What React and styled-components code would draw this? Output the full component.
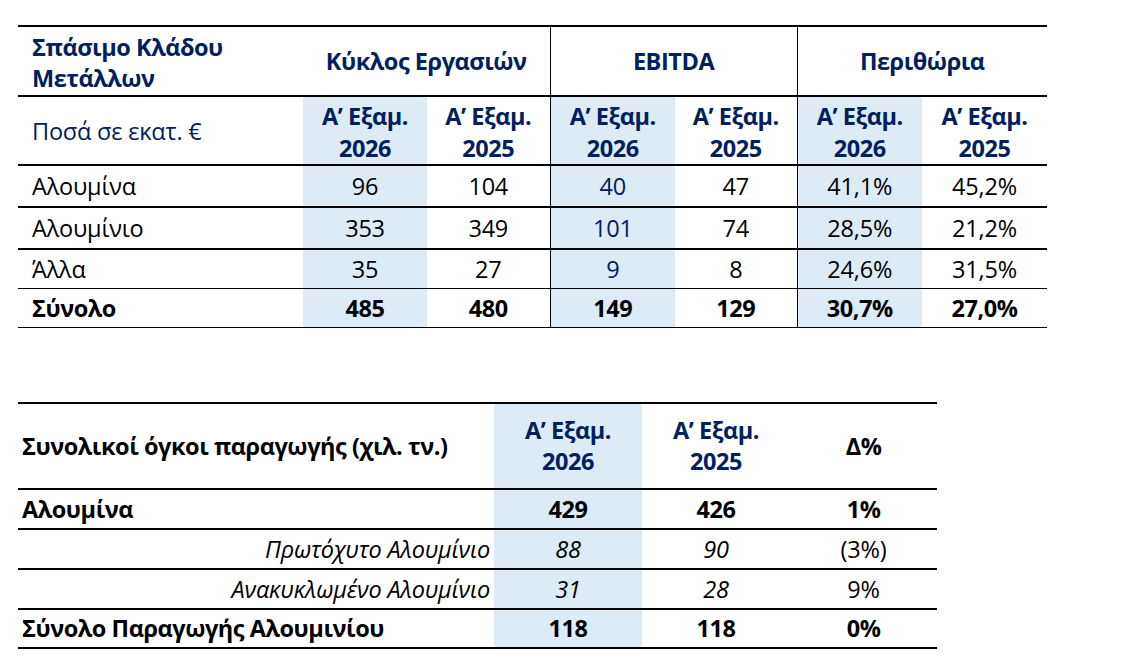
import React from 'react';
import styled, { createGlobalStyle } from 'styled-components';

const GlobalStyle = createGlobalStyle`
  html, body {
    margin: 0;
    padding: 0;
    background: #ffffff;
  }
  body {
    font-family: 'Open Sans', 'Noto Sans', 'DejaVu Sans', sans-serif;
    color: #000000;
  }
`;

const NAVY = '#002060';
const SHADE = '#ddebf7';

const Page = styled.div`
  display: flex;
  flex-direction: column;
  align-items: flex-start;
  gap: 74px;
  padding: 25px 0 0 18px;
`;

const Table = styled.table`
  border-collapse: collapse;
  table-layout: fixed;
  width: ${(p) => p.$width}px;
  border-top: 2px solid #000;
`;

const Row = styled.tr`
  height: ${(p) => p.$h}px;
  border-bottom: ${(p) => p.$line || 2}px solid #000;
`;

const Cell = styled.td`
  padding: ${(p) =>
    p.$align === 'left'
      ? `${p.$drop || 0}px 0 0 ${p.$indent ?? 14}px`
      : p.$align === 'right'
      ? '0 4px 0 0'
      : `${p.$drop || 0}px 0 0 0`};
  text-align: ${(p) => p.$align || 'center'};
  vertical-align: middle;
  background: ${(p) => (p.$shade ? SHADE : 'transparent')};
  border-left: ${(p) => (p.$divider ? '1px solid #000' : 'none')};
  color: ${(p) => (p.$navy ? NAVY : '#000')};
  font-weight: ${(p) => (p.$bold ? 700 : 400)};
  font-style: ${(p) => (p.$italic ? 'italic' : 'normal')};
  font-size: 23.5px;
  line-height: ${(p) => p.$lh || 28}px;
  letter-spacing: ${(p) => (p.$bold ? '-0.45px' : '-0.2px')};
  white-space: nowrap;
`;

const segments = [
  { label: 'Αλουμίνα', v: ['96', '104', '40', '47', '41,1%', '45,2%'], h: 42, line: 2 },
  { label: 'Αλουμίνιο', v: ['353', '349', '101', '74', '28,5%', '21,2%'], h: 42, line: 2 },
  { label: 'Άλλα', v: ['35', '27', '9', '8', '24,6%', '31,5%'], h: 39, line: 1 },
];

const total = { label: 'Σύνολο', v: ['485', '480', '149', '129', '30,7%', '27,0%'] };

const period = (year) => (
  <>
    Α’ Εξαμ.
    <br />
    {year}
  </>
);

const SegmentTable = () => (
  <Table $width={1029}>
    <colgroup>
      <col style={{ width: 285 }} />
      <col style={{ width: 124 }} />
      <col style={{ width: 123 }} />
      <col style={{ width: 125 }} />
      <col style={{ width: 122 }} />
      <col style={{ width: 125 }} />
      <col style={{ width: 125 }} />
    </colgroup>
    <tbody>
      <Row $h={70}>
        <Cell as="th" $align="left" $bold $navy $lh={31} $drop={3}>
          Σπάσιμο Κλάδου
          <br />
          Μετάλλων
        </Cell>
        <Cell as="th" colSpan={2} $bold $navy>
          Κύκλος Εργασιών
        </Cell>
        <Cell as="th" colSpan={2} $bold $navy $divider>
          EBITDA
        </Cell>
        <Cell as="th" colSpan={2} $bold $navy $divider>
          Περιθώρια
        </Cell>
      </Row>
      <Row $h={69}>
        <Cell $align="left" $navy>
          Ποσά σε εκατ. €
        </Cell>
        <Cell as="th" $bold $navy $lh={32} $drop={3} $shade>{period(2026)}</Cell>
        <Cell as="th" $bold $navy $lh={32} $drop={3}>{period(2025)}</Cell>
        <Cell as="th" $bold $navy $lh={32} $drop={3} $shade $divider>{period(2026)}</Cell>
        <Cell as="th" $bold $navy $lh={32} $drop={3}>{period(2025)}</Cell>
        <Cell as="th" $bold $navy $lh={32} $drop={3} $shade $divider>{period(2026)}</Cell>
        <Cell as="th" $bold $navy $lh={32} $drop={3}>{period(2025)}</Cell>
      </Row>
      {segments.map((s) => (
        <Row key={s.label} $h={s.h} $line={s.line}>
          <Cell $align="left">{s.label}</Cell>
          <Cell $shade>{s.v[0]}</Cell>
          <Cell>{s.v[1]}</Cell>
          <Cell $shade $divider $navy>{s.v[2]}</Cell>
          <Cell>{s.v[3]}</Cell>
          <Cell $shade $divider>{s.v[4]}</Cell>
          <Cell>{s.v[5]}</Cell>
        </Row>
      ))}
      <Row $h={39} $line={1}>
        <Cell $align="left" $bold>{total.label}</Cell>
        <Cell $shade $bold>{total.v[0]}</Cell>
        <Cell $bold>{total.v[1]}</Cell>
        <Cell $shade $divider $bold>{total.v[2]}</Cell>
        <Cell $bold>{total.v[3]}</Cell>
        <Cell $shade $divider $bold>{total.v[4]}</Cell>
        <Cell $bold>{total.v[5]}</Cell>
      </Row>
    </tbody>
  </Table>
);

const production = [
  { label: 'Αλουμίνα', v: ['429', '426', '1%'], bold: true, h: 40 },
  { label: 'Πρωτόχυτο Αλουμίνιο', v: ['88', '90', '(3%)'], italic: true, h: 40 },
  { label: 'Ανακυκλωμένο Αλουμίνιο', v: ['31', '28', '9%'], italic: true, h: 40 },
  { label: 'Σύνολο Παραγωγής Αλουμινίου', v: ['118', '118', '0%'], bold: true, h: 39 },
];

const ProductionTable = () => (
  <Table $width={919}>
    <colgroup>
      <col style={{ width: 476 }} />
      <col style={{ width: 148 }} />
      <col style={{ width: 148 }} />
      <col style={{ width: 147 }} />
    </colgroup>
    <tbody>
      <Row $h={86}>
        <Cell as="th" $align="left" $indent={4} $bold>
          Συνολικοί όγκοι παραγωγής (χιλ. τν.)
        </Cell>
        <Cell as="th" $bold $navy $lh={31} $shade>{period(2026)}</Cell>
        <Cell as="th" $bold $navy $lh={31}>{period(2025)}</Cell>
        <Cell as="th" $bold>Δ%</Cell>
      </Row>
      {production.map((r) => (
        <Row key={r.label} $h={r.h}>
          <Cell
            $align={r.italic ? 'right' : 'left'}
            $indent={4}
            $bold={r.bold}
            $italic={r.italic}
          >
            {r.label}
          </Cell>
          <Cell $shade $bold={r.bold} $italic={r.italic}>{r.v[0]}</Cell>
          <Cell $bold={r.bold} $italic={r.italic}>{r.v[1]}</Cell>
          <Cell $bold={r.bold}>{r.v[2]}</Cell>
        </Row>
      ))}
    </tbody>
  </Table>
);

export default function App() {
  return (
    <>
      <GlobalStyle />
      <Page>
        <SegmentTable />
        <ProductionTable />
      </Page>
    </>
  );
}
